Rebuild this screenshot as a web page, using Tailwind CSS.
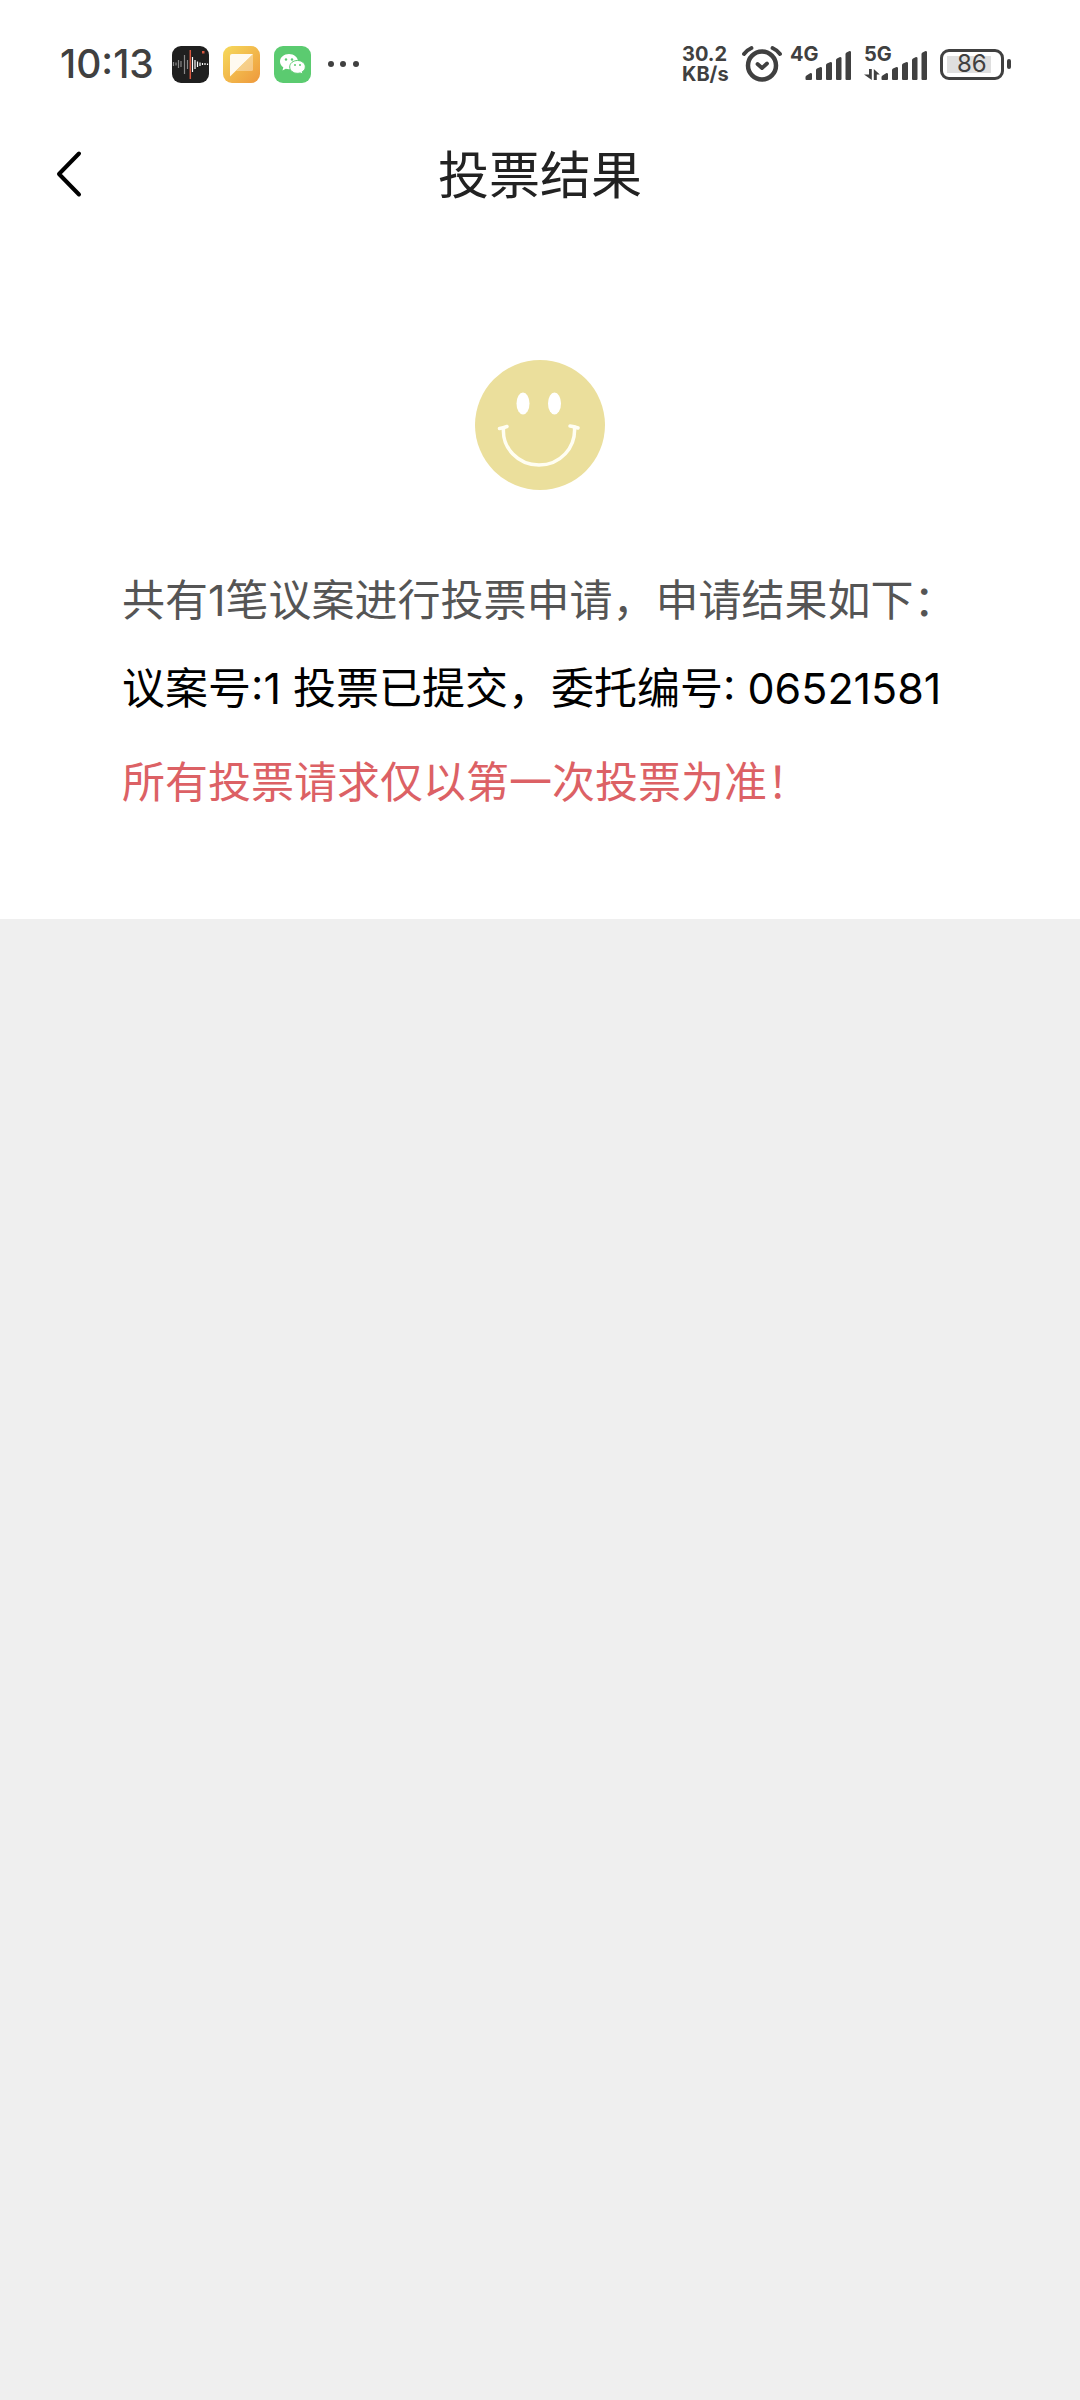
<!DOCTYPE html>
<html lang="zh-CN">
<head>
    <meta charset="UTF-8">
    <meta name="viewport" content="width=device-width, initial-scale=1.0">
    <title>投票结果</title>
    <script src="https://cdn.jsdelivr.net/npm/@tailwindcss/browser@4"></script>
</head>
<body class="min-h-screen bg-[#efefef] font-['Inter','Noto_Sans_CJK_SC',sans-serif]">

    <div class="bg-white">
        <!-- Status bar -->
        <div class="h-32 pl-15 pr-[69px] flex items-center justify-between text-[#404040]">
            <div class="flex items-center">
                <span class="w-28 text-[39px] font-medium whitespace-nowrap">10:13</span>
                <div class="flex items-center gap-[14px]">
                    <!-- Recorder -->
                    <svg class="size-[37px]" viewBox="0 0 37 37">
                        <rect width="37" height="37" rx="9" fill="#1f1f1f"/>
                        <path d="M1.500 16v4M4 16.500v3M6.500 14v8M9 15v6M12.500 9v19M15.500 14v9" stroke="#888" stroke-width="1.200"/>
                        <path d="M20.500 11v15M23 14v9M25.500 15.500v5.500M28 16.500v3.500M30.500 17v2M33 17v2M35.500 17.500v1.500" stroke="#fff" stroke-width="1.200"/>
                        <path d="M18.300 4v29" stroke="#d8573f" stroke-width="1.500"/>
                        <rect x="30" y="5" width="2.500" height="2.500" fill="#d8573f"/>
                    </svg>
                    <!-- Notes -->
                    <svg class="size-[37px]" viewBox="0 0 37 37">
                        <defs>
                            <linearGradient id="note" x1="0" y1="0" x2="1" y2="1">
                                <stop offset="0" stop-color="#f6da5c"/>
                                <stop offset="1" stop-color="#ee983c"/>
                            </linearGradient>
                        </defs>
                        <rect width="37" height="37" rx="9" fill="url(#note)"/>
                        <path d="M30 8V23.500Q30 25 28.500 25H13Z" fill="#fff" opacity=".35"/>
                        <path d="M9 8H30L7 30.500V10Q7 8 9 8Z" fill="#fffaf0"/>
                    </svg>
                    <!-- WeChat -->
                    <svg class="size-[37px]" viewBox="0 0 37 37">
                        <rect width="37" height="37" rx="9" fill="#5bcb70"/>
                        <path d="M15 8C10 8 6 11.300 6 15.500c0 2.400 1.300 4.500 3.300 5.800L8.500 24.500l3.300-1.700c1 .3 2 .4 3.200.4 5 0 9-3.300 9-7.600S20 8 15 8Z" fill="#fff"/>
                        <path d="M23.500 14.500c-4.400 0-7.800 2.800-7.800 6.400s3.400 6.400 7.800 6.400c1 0 1.900-.1 2.700-.4l2.700 1.400-.7-2.500c1.900-1.200 3.100-2.900 3.100-4.900 0-3.600-3.400-6.400-7.800-6.400Z" fill="#fff" stroke="#5bcb70"/>
                        <g fill="#5bcb70">
                            <circle cx="12" cy="13.500" r="1.200"/><circle cx="18" cy="13.500" r="1.200"/>
                            <circle cx="21" cy="19" r="1"/><circle cx="26" cy="19" r="1"/>
                        </g>
                    </svg>
                </div>
                <svg class="ml-4 w-8 h-2" viewBox="0 0 32 8" fill="currentColor">
                    <circle cx="4" cy="4" r="3"/><circle cx="16" cy="4" r="3"/><circle cx="29" cy="4" r="3"/>
                </svg>
            </div>

            <div class="flex items-center">
                <div class="w-15 text-[20px] font-bold whitespace-nowrap">
                    <p class="leading-5">30.2</p>
                    <p class="leading-5">KB/s</p>
                </div>
                <!-- Alarm -->
                <svg class="w-10 h-9" viewBox="0 0 40 36" fill="none" stroke="currentColor" stroke-linecap="round" stroke-linejoin="round">
                    <circle cx="20" cy="19.500" r="14" stroke-width="4.500"/>
                    <path d="M15.500 18L20 22L25 17.500" stroke-width="3.800"/>
                    <path d="M2 8Q5 4 9.500 2M38 8Q35 4 30.500 2" stroke-width="3.800"/>
                </svg>
                <!-- 4G signal -->
                <div class="relative ml-2 w-[62px] h-9">
                    <span class="absolute left-0 -top-0.5 text-[20px] leading-5 font-bold">4G</span>
                    <svg class="w-full h-full" viewBox="0 0 62 36" fill="currentColor">
                        <path d="M15.500 33v-2q0-1 1-1.500l4-2.500q1.500 0 1.500 1v5q0 1-1 1h-4.500q-1 0-1-1Z"/>
                        <path d="M26 33V24q0-1 1-1.500l3.500-1.500q1.500 0 1.500 1v11q0 1-1 1h-4q-1 0-1-1Z"/>
                        <path d="M36 33V19q0-1 1-1.500l3.500-1.500q1.500 0 1.500 1v16q0 1-1 1h-4q-1 0-1-1Z"/>
                        <path d="M46 33V14q0-1 1-1.500l3-1.500q1.500 0 1.500 1v21q0 1-1 1h-3.500q-1 0-1-1Z"/>
                        <path d="M55.500 33V8q0-1 1-1.500l3-1.500q1.500 0 1.500 1v27q0 1-1 1h-3.500q-1 0-1-1Z"/>
                    </svg>
                </div>
                <!-- 5G signal -->
                <div class="relative ml-3 w-[64px] h-9">
                    <span class="absolute left-0 -top-0.5 text-[20px] leading-5 font-bold">5G</span>
                    <svg class="w-full h-full" viewBox="-2 0 64 36" fill="currentColor">
                        <path d="M3 23h2.800v11L-2 28.500h5ZM7.800 34V23l6 5.500h-3V34Z"/>
                        <path d="M15.500 33v-2q0-1 1-1.500l4-2.500q1.500 0 1.500 1v5q0 1-1 1h-4.500q-1 0-1-1Z"/>
                        <path d="M26 33V24q0-1 1-1.500l3.500-1.500q1.500 0 1.500 1v11q0 1-1 1h-4q-1 0-1-1Z"/>
                        <path d="M36 33V19q0-1 1-1.500l3.500-1.500q1.500 0 1.500 1v16q0 1-1 1h-4q-1 0-1-1Z"/>
                        <path d="M46 33V14q0-1 1-1.500l3-1.500q1.500 0 1.500 1v21q0 1-1 1h-3.500q-1 0-1-1Z"/>
                        <path d="M55.500 33V8q0-1 1-1.500l3-1.500q1.500 0 1.500 1v27q0 1-1 1h-3.500q-1 0-1-1Z"/>
                    </svg>
                </div>
                <!-- Battery -->
                <div class="ml-3 flex items-center gap-[3px]">
                    <div class="w-16 h-[31px] p-1 rounded-[9px] border-3 border-current">
                        <div class="w-11 h-full bg-[#dfdfdf] pl-[10px] flex items-center text-[24px] leading-none">86</div>
                    </div>
                    <div class="w-1 h-[10px] rounded-full bg-current"></div>
                </div>
            </div>
        </div>

        <!-- Title bar -->
        <header class="h-[92px] px-12 grid grid-cols-[1fr_auto_1fr] items-center">
            <button type="button" aria-label="返回" class="w-10 h-12 flex items-center justify-center">
                <svg class="w-7 h-12" viewBox="0 0 28 48" fill="none" stroke="#000" stroke-width="4" stroke-linecap="round" stroke-linejoin="round">
                    <path d="M25 3.500L5 24L25 44.500"/>
                </svg>
            </button>
            <h1 class="pt-1 text-[51px] leading-[64px] text-[#222]">投票结果</h1>
        </header>

        <!-- Result -->
        <main class="px-[122px] pt-[140px] pb-[105px] text-[43px] leading-[64px]">
            <svg class="mx-auto mb-[78px] size-[130px]" viewBox="0 0 130 130">
                <circle cx="65" cy="65" r="65" fill="#ebdf9c"/>
                <ellipse cx="48" cy="43.500" rx="6.500" ry="11" fill="#fff"/>
                <ellipse cx="79.500" cy="43.500" rx="6.500" ry="11" fill="#fff"/>
                <g fill="none" stroke="#fffef2" stroke-width="3.500" stroke-linecap="round">
                    <path d="M28.500 68C27 88 43 105 64 105S101 88 99.500 67"/>
                    <path d="M24.500 68.500Q28 68 32 66.500M95 66Q99 66.500 103 68"/>
                </g>
            </svg>
            <p class="text-[#555]">共有1笔议案进行投票申请，申请结果如下：</p>
            <p class="mt-6 text-black">议案号:1 投票已提交，委托编号: 06521581</p>
            <p class="mt-[30px] text-[#dc6165]">所有投票请求仅以第一次投票为准！</p>
        </main>
    </div>

</body>
</html>
